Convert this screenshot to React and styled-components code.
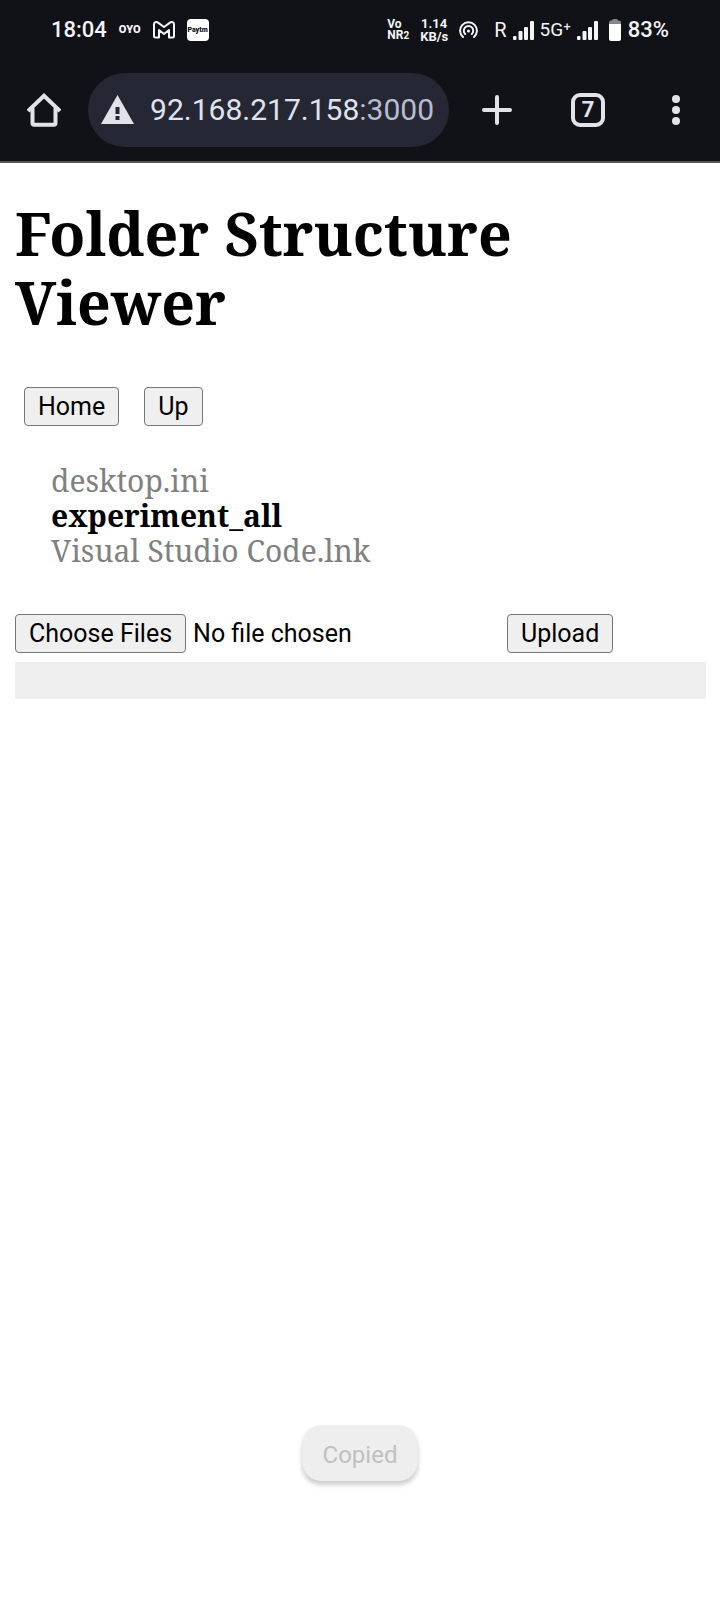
import React from "react";
import styled, { createGlobalStyle } from "styled-components";

const GlobalStyle = createGlobalStyle`
  * { box-sizing: border-box; }
  body {
    margin: 0;
    background: #fff;
    color: #000;
    font-family: "Noto Serif", "DejaVu Serif Condensed", "DejaVu Serif", serif;
  }
`;

const Screen = styled.div`
  position: relative;
  min-height: 100vh;
  display: flex;
  flex-direction: column;
`;

const StatusBar = styled.div`
  display: flex;
  justify-content: space-between;
  align-items: center;
  height: 60px;
  padding: 0 51px;
  background: #111217;
  color: #f4f4f6;
  font-family: Roboto, sans-serif;
`;

const StatusGroup = styled.div`
  display: flex;
  align-items: center;
  gap: ${(p) => p.$gap}px;
`;

const StatusText = styled.span`
  font-size: ${(p) => p.$size || 22}px;
  line-height: 28px;
  font-weight: ${(p) => p.$weight || 400};
`;

const Wordmark = styled.span`
  font-size: 11px;
  line-height: 16px;
  font-weight: 900;
`;

const AppTile = styled.span`
  display: flex;
  align-items: center;
  justify-content: center;
  width: 22px;
  height: 22px;
  border-radius: 4px;
  background: #fff;
  color: #111217;
  font-size: 7px;
  font-weight: 900;
`;

const Stacked = styled.span`
  display: flex;
  flex-direction: column;
  align-items: ${(p) => p.$align || "center"};
  font-size: ${(p) => p.$size || 12}px;
  line-height: ${(p) => p.$line || 13}px;
  font-weight: 700;

  small { font-size: 10px; }
`;

const Toolbar = styled.nav`
  display: flex;
  align-items: center;
  height: 103px;
  padding: 0 0 2px;
  background: #111217;
  border-bottom: 2px solid #55565a;
  font-family: Roboto, sans-serif;
`;

const IconButton = styled.button`
  display: flex;
  align-items: center;
  justify-content: center;
  flex: none;
  width: ${(p) => (p.$wide ? 95 : 88)}px;
  height: 74px;
  padding: 0;
  border: 0;
  background: none;
  color: #e3e2e9;
`;

const AddressBar = styled.div`
  display: flex;
  align-items: center;
  flex: 1;
  min-width: 0;
  height: 74px;
  padding: 0 15px 0 13px;
  gap: 14px;
  border-radius: 37px;
  background: #252834;
  color: #e0e2ee;
`;

const Address = styled.div`
  display: flex;
  justify-content: flex-end;
  flex: 1;
  min-width: 0;
  overflow: hidden;
  font-size: 30px;
  line-height: 36px;
  white-space: nowrap;
`;

const Port = styled.span`
  color: #b9bccb;
`;

const TabCount = styled.span`
  display: flex;
  align-items: center;
  justify-content: center;
  width: 34px;
  height: 34px;
  border: 4px solid #e3e2e9;
  border-radius: 9px;
  font: 700 22px/24px Roboto, sans-serif;
`;

const Content = styled.main`
  padding: 36px 14px 0 15px;
`;

const Title = styled.h1`
  margin: 0;
  font-size: 59px;
  line-height: 69px;
  font-weight: 700;
`;

const Actions = styled.div`
  display: flex;
  gap: 25px;
  margin-top: 50px;
  padding-left: 9px;
`;

const buttonLook = `
  height: 39px;
  margin: 0;
  padding: 0 13px;
  border: 1px solid #767676;
  border-radius: 4px;
  background: #efefef;
  color: #000;
  font: 400 25px/34px Roboto, sans-serif;
`;

const Button = styled.button`
  ${buttonLook}
`;

const FileList = styled.ul`
  margin: 37px 0 0;
  padding: 0 0 0 36px;
  list-style: none;
  font-size: 30px;
  line-height: 35px;
`;

const Entry = styled.li`
  color: ${(p) => (p.$folder ? "#000" : "#808080")};
  font-weight: ${(p) => (p.$folder ? 700 : 400)};
`;

const UploadForm = styled.form`
  display: flex;
  align-items: center;
  margin-top: 46px;
`;

const FileInput = styled.input`
  width: 492px;
  height: 39px;
  font: 400 25px/34px Roboto, sans-serif;
  color: #000;

  &::file-selector-button {
    ${buttonLook}
    margin-right: 7px;
  }
`;

const ProgressTrack = styled.div`
  height: 37px;
  margin-top: 9px;
  background: #efefef;
`;

const Toast = styled.div`
  position: absolute;
  bottom: 119px;
  left: 50%;
  transform: translateX(-50%);
  padding: 14px 20px 10px;
  border-radius: 19px;
  background: #eeeeee;
  color: #c0c0c0;
  box-shadow: 0 4px 5px rgba(0, 0, 0, 0.2);
  font: 400 24px/32px Roboto, sans-serif;
`;

const Signal = () => (
  <svg width="21" height="19" viewBox="0 0 21 19" fill="#f4f4f6" aria-hidden="true">
    <rect x="0" y="15" width="3.500" height="4" rx="1" />
    <rect x="5.500" y="10" width="4" height="9" rx="1" />
    <rect x="11" y="6" width="4" height="13" rx="1" />
    <rect x="17" y="0" width="4" height="19" rx="1" />
  </svg>
);

const files = [
  { name: "desktop.ini" },
  { name: "experiment_all", folder: true },
  { name: "Visual Studio Code.lnk" },
];

export default function App() {
  return (
    <Screen>
      <GlobalStyle />
      <StatusBar>
        <StatusGroup $gap={12}>
          <StatusText $weight={500}>18:04</StatusText>
          <Wordmark>OYO</Wordmark>
          <svg width="22" height="18" viewBox="0 0 22 18" fill="none" stroke="#f4f4f6" strokeWidth="2" strokeLinejoin="round" aria-hidden="true">
            <path d="M1 3.2C1 1 3.5.4 5 1.6L11 6l6-4.4C18.500.4 21 1 21 3.200V15a1.500 1.500 0 0 1-1.500 1.500H16V9l-5 4-5-4v7.500H2.500A1.500 1.500 0 0 1 1 15Z" />
          </svg>
          <AppTile>Paytm</AppTile>
        </StatusGroup>
        <StatusGroup $gap={11}>
          <Stacked $align="flex-start" $line={11}>
            <span>Vo</span>
            <span>NR<small>2</small></span>
          </Stacked>
          <Stacked $size={13}>
            <span>1.14</span>
            <span>KB/s</span>
          </Stacked>
          <svg width="19" height="19" viewBox="0 0 19 19" fill="none" stroke="#f4f4f6" strokeWidth="2" strokeLinecap="round" aria-hidden="true">
            <path d="M4 16A8.400 8.400 0 1 1 15 16" />
            <path d="M6.200 13A4.700 4.700 0 1 1 12.800 13" />
            <circle cx="9.500" cy="10" r="1.600" fill="#f4f4f6" stroke="none" />
          </svg>
          <StatusGroup $gap={6}>
            <StatusText $size={20}>&nbsp;R</StatusText>
            <Signal />
            <StatusText $size={19}>5G⁺</StatusText>
            <Signal />
          </StatusGroup>
          <StatusGroup $gap={7}>
            <svg width="12" height="22" viewBox="0 0 12 22" aria-hidden="true">
              <path d="M3 1.500Q3 0 4.500 0h3Q9 0 9 1.500h1q2 0 2 2V6H0V3.500q0-2 2-2Z" fill="#85868a" />
              <path d="M0 5h12v15q0 2-2 2H2q-2 0-2-2Z" fill="#fff" />
            </svg>
            <StatusText $weight={500}>83%</StatusText>
          </StatusGroup>
        </StatusGroup>
      </StatusBar>

      <Toolbar>
        <IconButton aria-label="Home page">
          <svg width="34" height="34" viewBox="0 0 34 34" fill="none" stroke="currentColor" strokeWidth="4" aria-hidden="true">
            <path d="M1 18 17 2.800 33 18" />
            <path d="M5.500 15V30q0 1.800 1.800 1.800h19.400q1.800 0 1.800-1.800V15" />
          </svg>
        </IconButton>
        <AddressBar>
          <svg width="33" height="29" viewBox="0 0 33 29" aria-hidden="true">
            <path d="M16.500 0 33 29H0Z" fill="#e3e2e9" />
            <path d="M14.500 12h4v7h-4zM14.500 21h4v4h-4z" fill="#252834" />
          </svg>
          <Address>
            <span>92.168.217.158<Port>:3000</Port></span>
          </Address>
        </AddressBar>
        <IconButton $wide aria-label="New tab">
          <svg width="30" height="30" viewBox="0 0 30 30" stroke="currentColor" strokeWidth="4" strokeLinecap="round" aria-hidden="true">
            <path d="M15 2v26M2 15h26" />
          </svg>
        </IconButton>
        <IconButton aria-label="Tabs">
          <TabCount>7</TabCount>
        </IconButton>
        <IconButton aria-label="More">
          <svg width="8" height="30" viewBox="0 0 8 30" fill="currentColor" aria-hidden="true">
            <circle cx="4" cy="4" r="4" />
            <circle cx="4" cy="15" r="4" />
            <circle cx="4" cy="26" r="4" />
          </svg>
        </IconButton>
      </Toolbar>

      <Content>
        <Title>Folder Structure Viewer</Title>
        <Actions>
          <Button type="button">Home</Button>
          <Button type="button">Up</Button>
        </Actions>
        <FileList>
          {files.map((file) => (
            <Entry key={file.name} $folder={file.folder}>{file.name}</Entry>
          ))}
        </FileList>
        <UploadForm onSubmit={(e) => e.preventDefault()}>
          <FileInput type="file" multiple aria-label="Files to upload" />
          <Button type="submit">Upload</Button>
        </UploadForm>
        <ProgressTrack role="progressbar" aria-label="Upload progress" aria-valuenow={0} />
      </Content>

      <Toast role="status">Copied</Toast>
    </Screen>
  );
}
